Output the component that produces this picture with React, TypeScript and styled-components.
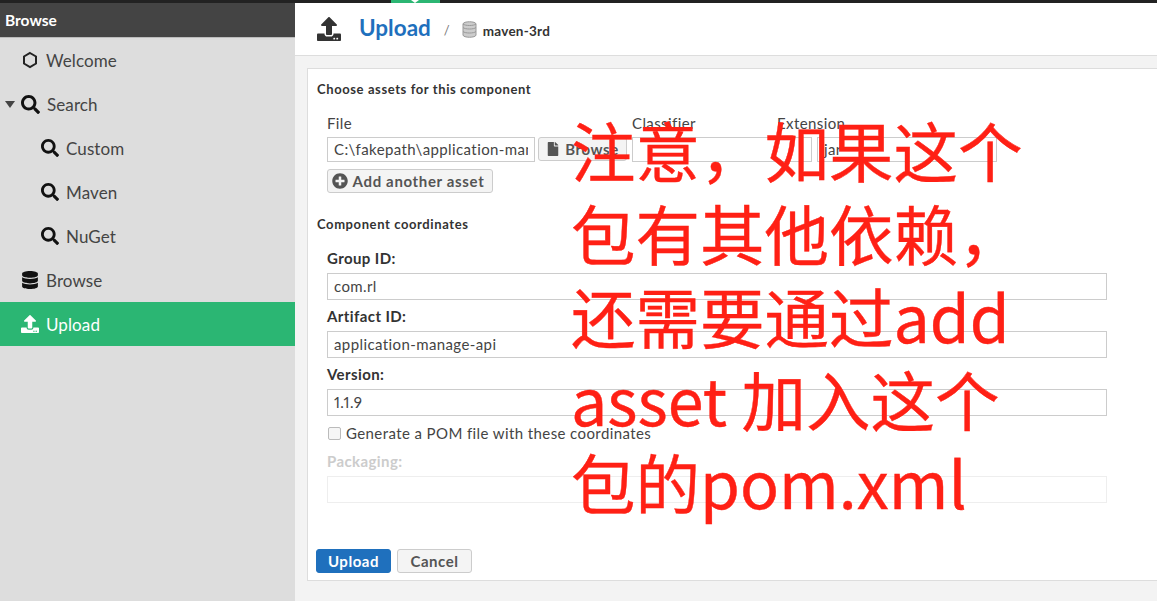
import React from "react";
import styled, { createGlobalStyle } from "styled-components";
import { FaSearch, FaDatabase, FaUpload, FaFile, FaPlusCircle } from "react-icons/fa";

const Global = createGlobalStyle`
  html, body { margin: 0; padding: 0; width: 1157px; height: 601px; overflow: hidden; background: #f3f3f3; }
  * { box-sizing: border-box; }
  body { font-family: Lato, "Liberation Sans", sans-serif; color: #444; }
`;
const Page = styled.div`position: relative; width: 1157px; height: 601px; display: flex; flex-direction: column; overflow: hidden;`;
const TopBar = styled.div`height: 3px; background: #222; flex: none; padding-left: 391px; display: flex;`;
const TopTab = styled.div`width: 49px; height: 3px; background: #2bb673; position: relative;
  &::after { content: ""; position: absolute; left: 20px; top: 0; border: 4px solid transparent; border-bottom: 0; border-top: 3px solid #fff; width: 0; height: 0; }`;
const Body = styled.div`flex: 1; display: flex; min-height: 0;`;
const Sidebar = styled.nav`width: 295px; flex: none; background: #ddd; display: flex; flex-direction: column;`;
const SideHeader = styled.div`height: 35px; flex: none; background: #444; border-bottom: 1px solid #bbb; color: #fff; font-weight: 700; font-size: 15.5px; line-height: 34px; padding-left: 5px;`;
const NavItem = styled.div<{ $level?: number; $active?: boolean }>`
  height: 44px; flex: none; display: flex; align-items: center;
  padding-left: ${p => (p.$level ? 41 : 21)}px;
  font-size: 17px; letter-spacing: 0.1px; color: ${p => (p.$active ? "#fff" : "#444")};
  background: ${p => (p.$active ? "#2bb673" : "transparent")};
  position: relative;
  svg { color: ${p => (p.$active ? "#fff" : "#111")}; flex: none; }
`;
const NavList = styled.div`display: flex; flex-direction: column;`;
const NavLabel = styled.span`margin-left: 7px;`;
const Caret = styled.span`position: absolute; left: 5px; top: 19px; width: 0; height: 0; border-left: 5px solid transparent; border-right: 5px solid transparent; border-top: 7px solid #444;`;
const Main = styled.main`flex: 1; display: flex; flex-direction: column; min-width: 0;`;
const Header = styled.header`height: 53px; flex: none; background: #fff; border-bottom: 1px solid #ddd; display: flex; align-items: center; padding-left: 22px; color: #333;`;
const Title = styled.h1`margin: 0 0 2px 18px; font-size: 22.5px; font-weight: 700; color: #1f70bd; line-height: 1;`;
const Sep = styled.span`margin: 2px 12px 0 13px; font-size: 13px; color: #777;`;
const Repo = styled.span`margin: 3px 0 0 6px; font-size: 13.5px; letter-spacing: 0.25px; font-weight: 700; color: #333;`;
const Content = styled.div`flex: 1; padding: 12px 0 20px 12px; background: #f3f3f3; min-height: 0;`;
const Panel = styled.section`height: 513px; background: #fff; border: 1px solid #ddd; border-right: 0; padding: 12px 0 0 9px; display: flex; flex-direction: column;`;
const SectionTitle = styled.h2`margin: 0; font-size: 13px; letter-spacing: 0.6px; font-weight: 700; color: #333; line-height: 16px;`;
const Fields = styled.div`padding-left: 10px; display: flex; flex-direction: column; letter-spacing: 0.4px;`;
const AssetLabels = styled.div`display: flex; margin-top: 17px; font-size: 15px; line-height: 18px; color: #444;`;
const AssetLabel = styled.span<{ $w: number }>`width: ${p => p.$w}px; flex: none;`;
const AssetRow = styled.div`display: flex; margin-top: 5px;`;
const Input = styled.input<{ $w: number; $ml?: number }>`
  width: ${p => p.$w}px; height: 27px; margin-left: ${p => p.$ml || 0}px; flex: none;
  border: 1px solid #ccc; background: #fff; padding: 0 6px 2px; font: 15px Lato, sans-serif; letter-spacing: 0.4px; font-variant-numeric: proportional-nums; color: #444; outline: none; border-radius: 0;
  &:disabled { border-color: #eee; background: #fff; }
`;
const AssetInput = styled(Input)`height: 25px;`;
const Btn = styled.button<{ $primary?: boolean; $w: number; $ml?: number }>`
  width: ${p => p.$w}px; height: 24px; margin-left: ${p => p.$ml || 0}px; flex: none;
  display: inline-flex; align-items: center; justify-content: center; gap: 5px; padding: 0 0 1px;
  border: 1px solid ${p => (p.$primary ? "#1f70bd" : "#ccc")}; border-radius: 3px;
  background: ${p => (p.$primary ? "#1f70bd" : "#f4f4f4")}; color: ${p => (p.$primary ? "#fff" : "#555")};
  font: 700 15px Lato, sans-serif; letter-spacing: 0.55px;
`;
const AddButton = styled(Btn)`padding-right: 4px; letter-spacing: 0.65px;`;
const AddRow = styled.div`display: flex; margin-top: 7px;`;
const SubTitle = styled(SectionTitle)`margin-top: 23px;`;
const FieldLabel = styled.label<{ $dim?: boolean; $mt: number }>`font-size: 15px; font-weight: 700; line-height: 18px; margin-top: ${p => p.$mt}px; margin-bottom: 6px; color: ${p => (p.$dim ? "#ccc" : "#333")};`;
const CheckRow = styled.div`display: flex; align-items: center; gap: 5px; margin-top: 8px; padding-left: 1px; font-size: 15px; line-height: 18px; color: #444;`;
const Check = styled.span`width: 13px; height: 13px; border: 1px solid #bbb; border-radius: 2px; background: #f6f6f6;`;
const Actions = styled.div`display: flex; margin-top: 46px; margin-left: -1px;`;
const Overlay = styled.div`position: absolute; left: 571px; top: 108px; width: 470px; font-family: "Noto Sans CJK SC", "Noto Sans", sans-serif; font-size: 64.5px; font-weight: 400; -webkit-text-stroke: 0.4px #ff2015; line-height: 83px; color: #ff2015; white-space: nowrap;`;

const HexIcon = () => (
  <svg width="18" height="18" viewBox="0 0 18 18" fill="none" stroke="#222" strokeWidth="2"><path d="M9 2l6 3.5v7L9 16l-6-3.5v-7z" /></svg>
);
const RepoIcon = () => (
  <svg width="15" height="17" viewBox="0 0 15 17"><path d="M1 3c0-3 13-3 13 0v11c0 3-13 3-13 0z" fill="#ccc" stroke="#999" /><path d="M1 6.5c2 2 11 2 13 0M1 10.5c2 2 11 2 13 0M1 3c2 2 11 2 13 0" fill="none" stroke="#999" /></svg>
);

export default function App() {
  return (
    <Page>
      <Global />
      <TopBar><TopTab /></TopBar>
      <Body>
        <Sidebar>
          <SideHeader>Browse</SideHeader>
          <NavList>
            <NavItem><HexIcon /><NavLabel>Welcome</NavLabel></NavItem>
            <NavItem><Caret /><FaSearch size={19} /><NavLabel>Search</NavLabel></NavItem>
            <NavItem $level={1}><FaSearch size={18} /><NavLabel>Custom</NavLabel></NavItem>
            <NavItem $level={1}><FaSearch size={18} /><NavLabel>Maven</NavLabel></NavItem>
            <NavItem $level={1}><FaSearch size={18} /><NavLabel>NuGet</NavLabel></NavItem>
            <NavItem><FaDatabase size={18} /><NavLabel>Browse</NavLabel></NavItem>
            <NavItem $active><FaUpload size={18} /><NavLabel>Upload</NavLabel></NavItem>
          </NavList>
        </Sidebar>
        <Main>
          <Header>
            <FaUpload size={24} />
            <Title>Upload</Title>
            <Sep>/</Sep>
            <RepoIcon />
            <Repo>maven-3rd</Repo>
          </Header>
          <Content>
            <Panel>
              <SectionTitle>Choose assets for this component</SectionTitle>
              <Fields>
                <AssetLabels>
                  <AssetLabel $w={305}>File</AssetLabel>
                  <AssetLabel $w={145}>Classifier</AssetLabel>
                  <AssetLabel $w={100}>Extension</AssetLabel>
                </AssetLabels>
                <AssetRow>
                  <AssetInput $w={208} readOnly value="C:\fakepath\application-manage-api-1.1.9.jar" />
                  <Btn $w={89} $ml={3}><FaFile size={14} />Browse</Btn>
                  <AssetInput $w={180} $ml={5} readOnly value="" />
                  <AssetInput $w={180} $ml={5} readOnly value="jar" />
                </AssetRow>
                <AddRow><AddButton $w={166}><FaPlusCircle size={16} />Add another asset</AddButton></AddRow>
              </Fields>
              <SubTitle>Component coordinates</SubTitle>
              <Fields>
                <FieldLabel $mt={17}>Group ID:</FieldLabel>
                <Input $w={780} readOnly value="com.rl" />
                <FieldLabel $mt={7}>Artifact ID:</FieldLabel>
                <Input $w={780} readOnly value="application-manage-api" />
                <FieldLabel $mt={7}>Version:</FieldLabel>
                <Input $w={780} readOnly value="1.1.9" />
                <CheckRow><Check />Generate a POM file with these coordinates</CheckRow>
                <FieldLabel $dim $mt={10}>Packaging:</FieldLabel>
                <Input $w={780} disabled value="" />
              </Fields>
              <Actions>
                <Btn $primary $w={75}>Upload</Btn>
                <Btn $w={75} $ml={6}>Cancel</Btn>
              </Actions>
            </Panel>
          </Content>
        </Main>
      </Body>
      <Overlay>
        注意，如果这个<br />包有其他依赖，<br />还需要通过add<br />asset 加入这个<br />包的pom.xml
      </Overlay>
    </Page>
  );
}
